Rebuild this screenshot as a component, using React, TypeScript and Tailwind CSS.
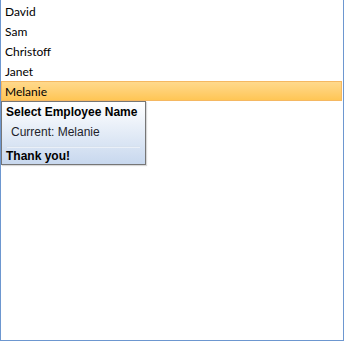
import React from 'react';

const names = ['David', 'Sam', 'Christoff', 'Janet', 'Melanie'];

export default function App() {
  const selected = 'Melanie';

  return (
    <div className="w-[344px] h-[341px] bg-white border-x border-b border-[#6d97d0] font-['Lato',sans-serif] text-[12px] text-black">
      <ul className="pt-[1px] pr-[1px]">
        {names.map((name) =>
          name === selected ? (
            <li
              key={name}
              className="h-[20px] flex items-center pt-[1px] pl-[3px] border border-[#f5b862] bg-gradient-to-b from-[#ffd98c] to-[#ffc654]"
            >
              {name}
            </li>
          ) : (
            <li key={name} className="h-[20px] flex items-center pt-[1px] pl-[4px]">
              {name}
            </li>
          )
        )}
      </ul>

      <div className="w-[145px] border border-[#767676] bg-gradient-to-b from-white to-[#c8d8ee] font-['Liberation_Sans',sans-serif] leading-[14px] shadow-[1px_1px_1px_rgba(0,0,0,0.15)]">
        <div className="px-[4px] pt-[3px] font-bold">Select Employee Name</div>
        <div className="pl-[9px] pt-[6px] text-[#1e1e2a]">Current: Melanie</div>
        <div className="mx-[5px] mt-[7px] h-[2px] bg-[#eaf0f8] border-t border-[#d7e1ee]" />
        <div className="px-[4px] pt-[1px] pb-[1px] font-bold">Thank you!</div>
      </div>
    </div>
  );
}
